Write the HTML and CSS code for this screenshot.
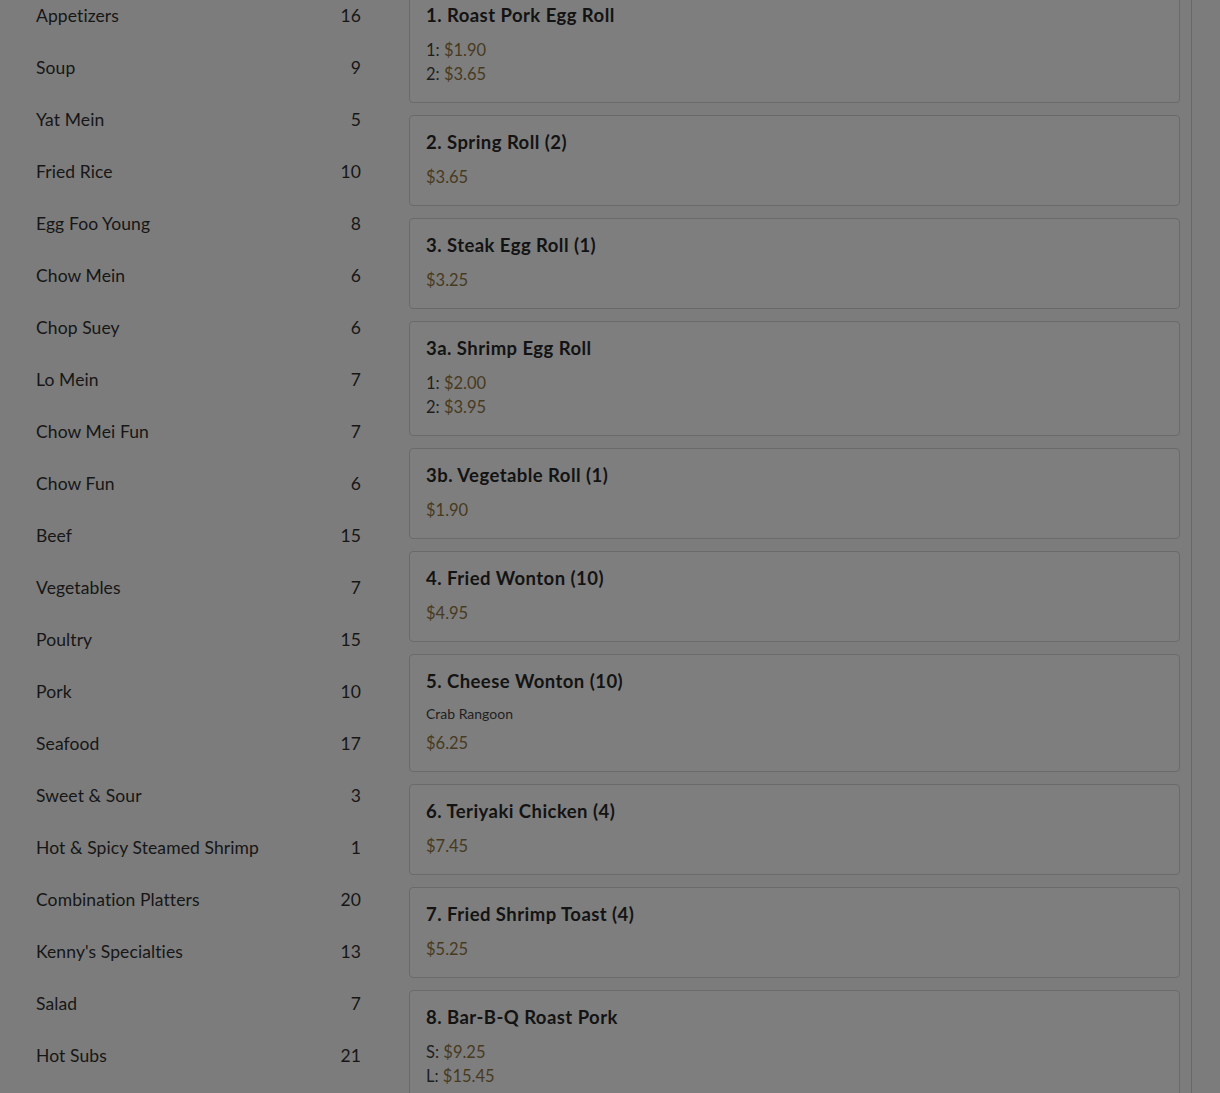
FILE: index.html
```html
<!DOCTYPE html>
<html lang="en">
<head>
<meta charset="utf-8">
<title>Menu</title>
<link rel="stylesheet" href="styles.css">
</head>
<body>
<div class="page">
  <aside class="sidebar">
    <ul class="cats">
      <li class="cat"><span class="cat-name">Appetizers</span><span class="cat-count">16</span></li>
      <li class="cat"><span class="cat-name">Soup</span><span class="cat-count">9</span></li>
      <li class="cat"><span class="cat-name">Yat Mein</span><span class="cat-count">5</span></li>
      <li class="cat"><span class="cat-name">Fried Rice</span><span class="cat-count">10</span></li>
      <li class="cat"><span class="cat-name">Egg Foo Young</span><span class="cat-count">8</span></li>
      <li class="cat"><span class="cat-name">Chow Mein</span><span class="cat-count">6</span></li>
      <li class="cat"><span class="cat-name">Chop Suey</span><span class="cat-count">6</span></li>
      <li class="cat"><span class="cat-name">Lo Mein</span><span class="cat-count">7</span></li>
      <li class="cat"><span class="cat-name">Chow Mei Fun</span><span class="cat-count">7</span></li>
      <li class="cat"><span class="cat-name">Chow Fun</span><span class="cat-count">6</span></li>
      <li class="cat"><span class="cat-name">Beef</span><span class="cat-count">15</span></li>
      <li class="cat"><span class="cat-name">Vegetables</span><span class="cat-count">7</span></li>
      <li class="cat"><span class="cat-name">Poultry</span><span class="cat-count">15</span></li>
      <li class="cat"><span class="cat-name">Pork</span><span class="cat-count">10</span></li>
      <li class="cat"><span class="cat-name">Seafood</span><span class="cat-count">17</span></li>
      <li class="cat"><span class="cat-name">Sweet &amp; Sour</span><span class="cat-count">3</span></li>
      <li class="cat"><span class="cat-name">Hot &amp; Spicy Steamed Shrimp</span><span class="cat-count">1</span></li>
      <li class="cat"><span class="cat-name">Combination Platters</span><span class="cat-count">20</span></li>
      <li class="cat"><span class="cat-name">Kenny's Specialties</span><span class="cat-count">13</span></li>
      <li class="cat"><span class="cat-name">Salad</span><span class="cat-count">7</span></li>
      <li class="cat"><span class="cat-name">Hot Subs</span><span class="cat-count">21</span></li>
    </ul>
  </aside>
  <main class="main">
    <div class="item">
      <h3 class="item-title">1. Roast Pork Egg Roll</h3>
      <div class="price-row">1: <span class="price">$1.90</span></div>
      <div class="price-row">2: <span class="price">$3.65</span></div>
    </div>
    <div class="item">
      <h3 class="item-title">2. Spring Roll (2)</h3>
      <div class="price-row"><span class="price">$3.65</span></div>
    </div>
    <div class="item">
      <h3 class="item-title">3. Steak Egg Roll (1)</h3>
      <div class="price-row"><span class="price">$3.25</span></div>
    </div>
    <div class="item">
      <h3 class="item-title">3a. Shrimp Egg Roll</h3>
      <div class="price-row">1: <span class="price">$2.00</span></div>
      <div class="price-row">2: <span class="price">$3.95</span></div>
    </div>
    <div class="item">
      <h3 class="item-title">3b. Vegetable Roll (1)</h3>
      <div class="price-row"><span class="price">$1.90</span></div>
    </div>
    <div class="item">
      <h3 class="item-title">4. Fried Wonton (10)</h3>
      <div class="price-row"><span class="price">$4.95</span></div>
    </div>
    <div class="item">
      <h3 class="item-title">5. Cheese Wonton (10)</h3>
      <p class="item-desc">Crab Rangoon</p>
      <div class="price-row"><span class="price">$6.25</span></div>
    </div>
    <div class="item">
      <h3 class="item-title">6. Teriyaki Chicken (4)</h3>
      <div class="price-row"><span class="price">$7.45</span></div>
    </div>
    <div class="item">
      <h3 class="item-title">7. Fried Shrimp Toast (4)</h3>
      <div class="price-row"><span class="price">$5.25</span></div>
    </div>
    <div class="item">
      <h3 class="item-title">8. Bar-B-Q Roast Pork</h3>
      <div class="price-row">S: <span class="price">$9.25</span></div>
      <div class="price-row">L: <span class="price">$15.45</span></div>
    </div>
  </main>
</div>
</body>
</html>
```

FILE: styles.css
```css
html, body {
  margin: 0;
  padding: 0;
  background: #7c7c7c;
  height: 100%;
  overflow: hidden;
}
body {
  font-family: "Lato", "Noto Sans", sans-serif;
  color: #161616;
}
.page {
  display: flex;
  align-items: flex-start;
  margin-top: -12px;
}
.sidebar {
  width: 385px;
  flex: none;
}
.cats {
  list-style: none;
  margin: 0;
  padding: 1px 24px 0 36px;
}
.cat {
  display: flex;
  justify-content: space-between;
  align-items: center;
  height: 52px;
  font-size: 17.5px;
  letter-spacing: 0.1px;
}
.main {
  width: 771px;
  flex: none;
  padding: 0 11px 0 24px;
  border-right: 1px solid #686868;
  min-height: 1200px;
  display: flex;
  flex-direction: column;
  gap: 12px;
}
.item {
  border: 1px solid #6a6a6a;
  border-radius: 4px;
  padding: 15px 16px 16px;
  background: #7e7e7e;
}
.item-title {
  margin: 0 0 12px;
  font-size: 18.5px;
  line-height: 22px;
  font-weight: 700;
  letter-spacing: 0.45px;
  color: #131313;
}
.item-desc {
  margin: 0 0 7px;
  font-size: 14px;
  line-height: 20px;
  color: #1e1e1e;
}
.price-row {
  font-size: 16.5px;
  line-height: 24px;
  color: #1e1e1e;
}
.price {
  color: #473a1f;
}
```
